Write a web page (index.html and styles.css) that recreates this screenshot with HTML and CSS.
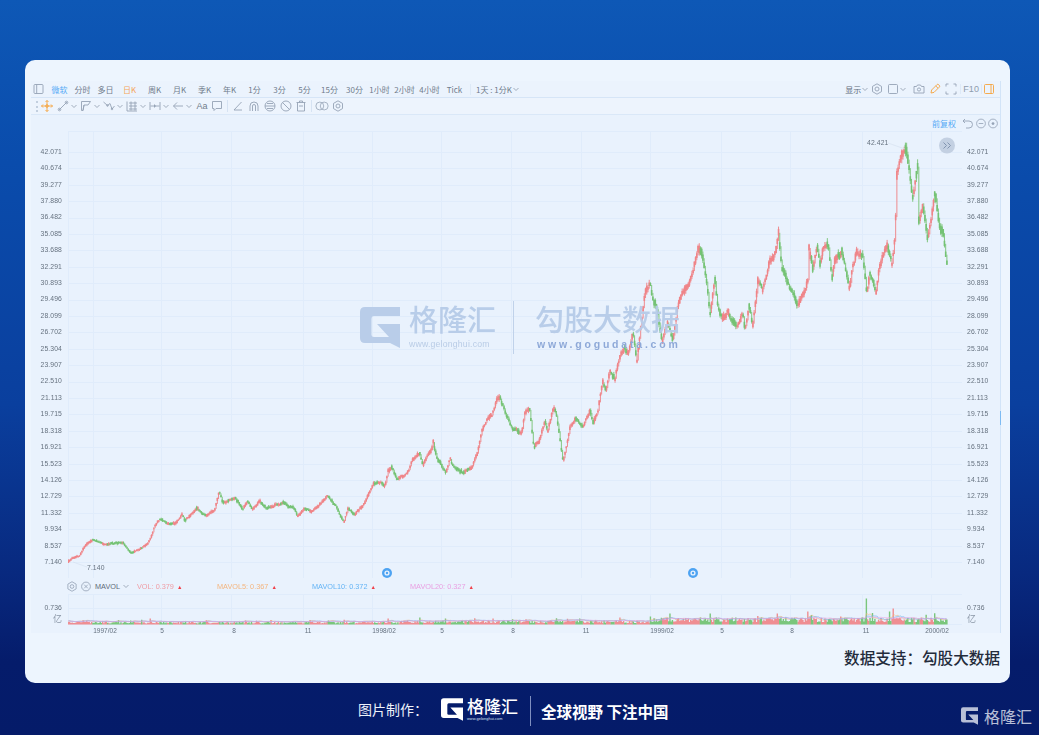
FILE: index.html
```html
<!DOCTYPE html>
<html lang="zh-CN">
<head>
<meta charset="utf-8">
<title>勾股大数据</title>
<link rel="stylesheet" href="styles.css">
</head>
<body>
<svg class="defs" aria-hidden="true">
  <symbol id="i-panel" viewBox="0 0 10 10"><rect x=".5" y=".5" width="9" height="9" rx="1"/><path d="M3.2.5v9"/></symbol>
  <symbol id="i-box" viewBox="0 0 10 10"><rect x=".5" y=".5" width="9" height="9" rx="1"/><path d="M7 .5v9"/></symbol>
  <symbol id="i-chev" viewBox="0 0 8 8"><path d="M1.5 3l2.5 2.5L6.500 3"/></symbol>
  <symbol id="i-gear" viewBox="0 0 12 12"><path d="M6 .8l4.500 2.600v5.200L6 11.200 1.500 8.600V3.400z"/><circle cx="6" cy="6" r="2"/></symbol>
  <symbol id="i-rect" viewBox="0 0 10 10"><rect x=".5" y=".5" width="9" height="9" rx="1"/></symbol>
  <symbol id="i-cam" viewBox="0 0 12 12"><path d="M1 3.500h2.500l1-1.500h3l1 1.500H11v6.500H1z"/><circle cx="6" cy="6.500" r="1.600"/></symbol>
  <symbol id="i-pen" viewBox="0 0 12 12"><path d="M2 10l.6-3L7.800 1.800a1.300 1.300 0 012 0l.4.4a1.300 1.300 0 010 2L5 9.400z"/><path d="M6.800 3l2.200 2.200"/></symbol>
  <symbol id="i-full" viewBox="0 0 12 12"><path d="M1 3.500V1h2.500M8.500 1H11v2.500M11 8.500V11H8.500M3.500 11H1V8.500"/></symbol>
  <symbol id="i-move" viewBox="0 0 12 12"><path d="M6 .5v11M.5 6h11M4.500 2L6 .5 7.500 2M4.500 10L6 11.500 7.500 10M2 4.500L.5 6 2 7.500M10 4.500L11.500 6 10 7.500"/><circle cx="6" cy="6" r="1.300"/></symbol>
  <symbol id="i-line" viewBox="0 0 12 12"><path d="M2 10l8-8"/><circle cx="2.500" cy="9.500" r="1.300"/><circle cx="9.500" cy="2.500" r="1.300"/></symbol>
  <symbol id="i-para" viewBox="0 0 12 12"><path d="M1.500 1.500h9L8 5H4L3 10.500H1.500zM4 5l-1 5.500"/></symbol>
  <symbol id="i-wave" viewBox="0 0 12 12"><path d="M.5 2l4 3.500L7 3.500l2 5.500 2.500-3"/><circle cx="4.500" cy="5.500" r=".8"/><circle cx="9" cy="9" r=".8"/></symbol>
  <symbol id="i-fib" viewBox="0 0 12 12"><path d="M1 1.500v9.500h10M3 3h8M3 6h8M3 9h8M5 1.500v9M9 1.500v9"/></symbol>
  <symbol id="i-range" viewBox="0 0 12 12"><path d="M1 2v8M11 2v8M1.500 6h9"/><path class="solid" d="M5 4l2 2-2 2z"/></symbol>
  <symbol id="i-back" viewBox="0 0 12 12"><path d="M11 6H1.500M5 2.500L1.500 6 5 9.500"/></symbol>
  <symbol id="i-note" viewBox="0 0 12 12"><path d="M1.500 1.500h9v7H5L3 10.500v-2H1.500z"/></symbol>
  <symbol id="i-angle" viewBox="0 0 12 12"><path d="M9.500 2L2 10h8"/></symbol>
  <symbol id="i-mag" viewBox="0 0 12 12"><path d="M2 11V6a4 4 0 018 0v5"/><path d="M4.500 11V6a1.500 1.500 0 013 0v5"/></symbol>
  <symbol id="i-eye" viewBox="0 0 12 12"><circle cx="6" cy="6" r="5"/><path d="M1 6h10M3 3.500h6M3 8.500h6"/></symbol>
  <symbol id="i-ban" viewBox="0 0 12 12"><circle cx="6" cy="6" r="5"/><path d="M2.500 2.500l7 7"/></symbol>
  <symbol id="i-trash" viewBox="0 0 12 12"><path d="M1.500 2.500h9M2.500 2.500v8.500h7V2.500M4.500 2.500V1h3v1.500M4 6h4"/></symbol>
  <symbol id="i-link" viewBox="0 0 16 12"><circle cx="5.500" cy="6" r="4.500"/><circle cx="10.500" cy="6" r="4.500"/></symbol>
  <symbol id="i-undo" viewBox="0 0 12 12"><path d="M3 2L1 4l2 2M1 4h6a3.500 3.500 0 010 7H4"/></symbol>
  <symbol id="i-minus" viewBox="0 0 12 12"><circle cx="6" cy="6" r="4.800"/><path d="M3.500 6h5"/></symbol>
  <symbol id="i-plus" viewBox="0 0 12 12"><circle cx="6" cy="6" r="4.800"/><circle class="solid" cx="6" cy="6" r="1.500"/></symbol>
  <symbol id="i-close" viewBox="0 0 12 12"><circle cx="6" cy="6" r="4.800"/><path d="M4 4l4 4M8 4l-4 4"/></symbol>
  <symbol id="logo-g" viewBox="0 0 40 41"><path class="solid" d="M5 0H40V9H14Q11.500 9 11.500 12V28Q11.500 30 14 30H29L17 17H40V41L30 36H5Q0 36 0 31V5Q0 0 5 0Z"/></symbol>
</svg>

<main class="card">
  <section class="widget">
    <div class="bar bar-top">
      <svg class="ic panel"><use href="#i-panel"/></svg>
      <span class="tab n active-blue">微软</span>
      <span class="tab n">分时</span>
      <span class="tab n">多日</span>
      <span class="tab active-orange">日K</span>
      <span class="tab">周K</span>
      <span class="tab">月K</span>
      <span class="tab">季K</span>
      <span class="tab">年K</span>
      <span class="tab">1分</span>
      <span class="tab">3分</span>
      <span class="tab">5分</span>
      <span class="tab">15分</span>
      <span class="tab">30分</span>
      <span class="tab">1小时</span>
      <span class="tab">2小时</span>
      <span class="tab">4小时</span>
      <span class="tab">Tick</span>
      <span class="period">1天 : 1分K</span>
      <svg class="chev"><use href="#i-chev"/></svg>
      <div class="bar-right">
        <span class="show">显示</span>
        <svg class="chev"><use href="#i-chev"/></svg>
        <svg class="ic ml1"><use href="#i-gear"/></svg>
        <svg class="ic small ml3"><use href="#i-rect"/></svg>
        <svg class="chev"><use href="#i-chev"/></svg>
        <svg class="ic ml5"><use href="#i-cam"/></svg>
        <svg class="ic orange ml2"><use href="#i-pen"/></svg>
        <svg class="ic ml2"><use href="#i-full"/></svg>
        <span class="f10">F10</span>
        <svg class="ic small orange box"><use href="#i-box"/></svg>
      </div>
    </div>

    <div class="bar bar-tools">
      <span class="grip"></span>
      <svg class="ic orange"><use href="#i-move"/></svg>
      <svg class="ic ml2"><use href="#i-line"/></svg><svg class="chev"><use href="#i-chev"/></svg>
      <svg class="ic ml1"><use href="#i-para"/></svg><svg class="chev"><use href="#i-chev"/></svg>
      <svg class="ic ml1"><use href="#i-wave"/></svg><svg class="chev"><use href="#i-chev"/></svg>
      <svg class="ic ml1"><use href="#i-fib"/></svg><svg class="chev"><use href="#i-chev"/></svg>
      <svg class="ic ml1"><use href="#i-range"/></svg><svg class="chev"><use href="#i-chev"/></svg>
      <svg class="ic ml1"><use href="#i-back"/></svg><svg class="chev"><use href="#i-chev"/></svg>
      <span class="aa">Aa</span>
      <svg class="ic ml1"><use href="#i-note"/></svg>
      <span class="sep"></span>
      <svg class="ic"><use href="#i-angle"/></svg>
      <svg class="ic ml2"><use href="#i-mag"/></svg>
      <svg class="ic ml2"><use href="#i-eye"/></svg>
      <svg class="ic ml2"><use href="#i-ban"/></svg>
      <svg class="ic ml1"><use href="#i-trash"/></svg>
      <span class="sep"></span>
      <svg class="ic"><use href="#i-link"/></svg>
      <svg class="ic ml2"><use href="#i-gear"/></svg>
    </div>

    <div class="adjust">
      <span class="adjust-label">前复权</span>
      <svg class="ic ml5"><use href="#i-undo"/></svg>
      <svg class="ic mini"><use href="#i-minus"/></svg>
      <svg class="ic mini"><use href="#i-plus"/></svg>
    </div>

    <div class="pane-price">
      <div class="axis axis-left">
        <span>42.071</span><span>40.674</span><span>39.277</span><span>37.880</span><span>36.482</span><span>35.085</span><span>33.688</span><span>32.291</span><span>30.893</span><span>29.496</span><span>28.099</span><span>26.702</span><span>25.304</span><span>23.907</span><span>22.510</span><span>21.113</span><span>19.715</span><span>18.318</span><span>16.921</span><span>15.523</span><span>14.126</span><span>12.729</span><span>11.332</span><span>9.934</span><span>8.537</span><span>7.140</span>
      </div>
      <svg id="price" class="plot" width="894" height="447" viewBox="68 130 894 447" role="img" aria-label="价格K线图">
        <g id="price-grid" class="grid"></g>
        <g id="candles"></g>
        <path class="leader" d="M888 142L905 148M73 561L87 566"/>
        <text class="val" x="867" y="144">42.421</text>
        <text class="val" x="87" y="569">7.140</text>
        <circle class="more-bg" cx="947" cy="144.500" r="8"/>
        <path class="more" d="M943.500 141.500l3 3-3 3M947.500 141.500l3 3-3 3"/>
        <circle class="mark" cx="387" cy="572" r="5"/><circle class="mark-in" cx="387" cy="572" r="2.600"/><circle class="mark" cx="387" cy="572" r="1.200"/>
        <circle class="mark" cx="693" cy="572" r="5"/><circle class="mark-in" cx="693" cy="572" r="2.600"/><circle class="mark" cx="693" cy="572" r="1.200"/>
      </svg>
      <div class="axis axis-right">
        <span>42.071</span><span>40.674</span><span>39.277</span><span>37.880</span><span>36.482</span><span>35.085</span><span>33.688</span><span>32.291</span><span>30.893</span><span>29.496</span><span>28.099</span><span>26.702</span><span>25.304</span><span>23.907</span><span>22.510</span><span>21.113</span><span>19.715</span><span>18.318</span><span>16.921</span><span>15.523</span><span>14.126</span><span>12.729</span><span>11.332</span><span>9.934</span><span>8.537</span><span>7.140</span>
      </div>
      <div class="watermark">
        <svg class="wm-g"><use href="#logo-g"/></svg>
        <div class="wm-block">
          <span class="wm-cn">格隆汇</span>
          <span class="wm-url">www.gelonghui.com</span>
        </div>
        <span class="wm-div"></span>
        <div class="wm-block">
          <span class="wm-cn">勾股大数据</span>
          <span class="wm-url strong">www.gogudata.com</span>
        </div>
      </div>
    </div>

    <div class="legend">
      <svg class="ic mini"><use href="#i-gear"/></svg>
      <svg class="ic mini"><use href="#i-close"/></svg>
      <span class="lg-name">MAVOL</span>
      <svg class="chev"><use href="#i-chev"/></svg>
      <span class="lg vol">VOL: 0.379 <i>▲</i></span>
      <span class="lg ma5">MAVOL5: 0.367 <i>▲</i></span>
      <span class="lg ma10">MAVOL10: 0.372 <i>▲</i></span>
      <span class="lg ma20">MAVOL20: 0.327 <i>▲</i></span>
    </div>

    <div class="pane-vol">
      <div class="vol-left">
        <span>0.736</span>
        <span class="yi">亿</span>
      </div>
      <svg id="volume" class="plot" width="894" height="40" viewBox="68 593 894 40" role="img" aria-label="成交量图">
        <g id="vol-grid" class="grid"></g>
        <g id="vol-bars"></g>
        <g class="dates">
          <text x="105" y="632">1997/02</text><text x="162" y="632">5</text><text x="234" y="632">8</text><text x="308" y="632">11</text>
          <text x="384" y="632">1998/02</text><text x="442" y="632">5</text><text x="513" y="632">8</text><text x="586" y="632">11</text>
          <text x="662" y="632">1999/02</text><text x="722" y="632">5</text><text x="792" y="632">8</text><text x="866" y="632">11</text>
          <text x="937" y="632">2000/02</text>
        </g>
      </svg>
      <div class="vol-right">
        <span>0.736</span>
        <span class="yi">亿</span>
      </div>
    </div>
    <span class="handle"></span>
  </section>
  <p class="credit">数据支持：勾股大数据</p>
</main>

<footer class="footer">
  <span class="made">图片制作：</span>
  <svg class="ft-g"><use href="#logo-g"/></svg>
  <div class="ft-brand">
    <span class="ft-cn">格隆汇</span>
    <span class="ft-url">www.gelonghui.com</span>
  </div>
  <span class="ft-div"></span>
  <strong class="slogan">全球视野 下注中国</strong>
  <div class="corner">
    <svg class="corner-g"><use href="#logo-g"/></svg>
    <span class="corner-cn">格隆汇</span>
  </div>
</footer>
<script src="script.js"></script>
</body>
</html>
```

FILE: styles.css
```css
* { box-sizing: border-box; }
html, body { margin: 0; height: 735px; overflow: hidden; }
body {
  width: 1039px;
  display: flex;
  flex-direction: column;
  font-family: "Noto Sans CJK SC", "Liberation Sans", sans-serif;
  background: linear-gradient(180deg, #0e58b6 0, #0a4cac 22%, #0a3f9e 55%, #08297f 78%, #051c6b 90%, #051b69 100%);
}
.defs { width: 0; height: 0; position: absolute; }
symbol * { fill: none; stroke: currentColor; stroke-width: .9; }
symbol .solid { fill: currentColor; stroke: none; }

.card {
  width: 985px;
  height: 623px;
  margin: 60px 0 0 25px;
  padding: 21px 9px 0 6px;
  background: #edf5fe;
  border-radius: 10px;
  flex: none;
}
.widget {
  position: relative;
  width: 970px;
  height: 552px;
  background: #e9f2fd;
  color: #707c8c;
  border-right: 1px solid #d2e4f8;
  filter: blur(.5px);
}

.bar { display: flex; align-items: center; font-size: 8px; white-space: nowrap; }
.bar-top { height: 17px; padding-left: 2px; background: #ebf3fd; border-bottom: 1px solid #d6e5f7; }
.bar-tools { height: 17px; padding-left: 5px; border-bottom: 1px solid #dae8f8; background: #edf4fd; }

.ic { width: 14px; height: 12px; color: #95a3b6; flex: none; }
.ic.small { width: 12px; height: 10px; }
.ic.mini { width: 12px; height: 11px; }
.ic.panel { width: 11px; height: 10px; margin-right: 4px; }
.ic.orange { color: #f5a33c; }
.chev { width: 8px; height: 8px; color: #98a5b6; flex: none; }
.ml1 { margin-left: 1px; }
.ml2 { margin-left: 2px; }
.ml3 { margin-left: 3px; }
.ml5 { margin-left: 5px; }

.tab { width: 25px; text-align: center; flex: none; }
.tab.n { width: 23px; }
.active-blue { color: #55a9f6; }
.active-orange { color: #f5a55a; }
.period { margin-left: 3px; border-left: 1px solid #dde9f7; padding-left: 5px; }
.bar-right { margin-left: auto; display: flex; align-items: center; padding-right: 5px; }
.show { color: #5f6b7a; }
.f10 { margin-left: 2px; padding: 0 2px; font: 9px "Liberation Sans", sans-serif; letter-spacing: .1px; color: #8f9cad; border-left: 1px solid #dde9f7; border-right: 1px solid #dde9f7; }
.box { margin-left: 1px; }

.grip { width: 4px; height: 11px; border-left: 2px dotted #c2cfdf; }
.aa { width: 14px; margin-left: 2px; font: 9px "Liberation Sans", sans-serif; text-align: center; }
.sep { width: 1px; height: 12px; margin: 0 3px; background: #d6e3f3; flex: none; }

.adjust { display: flex; align-items: center; justify-content: flex-end; height: 16px; padding-right: 1px; font-size: 8px; }
.adjust-label { color: #55a9f6; }

.pane-price { position: relative; display: flex; height: 447px; }
.axis { display: flex; flex-direction: column; padding-top: 12.800px; font: 6.800px/16.400px "Liberation Sans", sans-serif; color: #65717f; letter-spacing: .1px; flex: none; }
.axis-left { width: 37px; padding-right: 6px; text-align: right; }
.axis-right { width: 38px; padding-left: 5px; }
.plot { display: block; flex: none; }

.grid line { stroke: #e0ecfb; stroke-width: 1; }
.leader { fill: none; stroke: #d3dfee; stroke-width: .6; }
.val { font: 6.800px "Liberation Sans", sans-serif; fill: #65717f; letter-spacing: .1px; }
.more-bg { fill: #c3d0e2; }
.more { fill: none; stroke: #8194b0; stroke-width: 1; }
.mark { fill: #4da3f2; }
.mark-in { fill: #e8f2fd; }

.watermark { position: absolute; left: 329px; top: 170px; display: flex; align-items: flex-start; }
.wm-g { width: 40px; height: 41px; margin: 6px 9px 0 0; color: #b9cde9; }
.wm-block { display: flex; flex-direction: column; }
.wm-cn { font-family: "Liberation Sans", "Noto Sans CJK SC", sans-serif; font-size: 29px; line-height: 34px; margin-top: 3px; font-weight: 500; color: #b6cbe8; opacity: .95; }
.wm-url { font: 8.700px/10px "Liberation Sans", sans-serif; color: #b9cce6; letter-spacing: .2px; margin-top: 1px; }
.wm-url.strong { font-weight: 700; font-size: 10.500px; color: #8ea9d8; letter-spacing: 2.800px; margin-left: 2px; line-height: 10px; }
.wm-div { width: 1px; height: 53px; margin: 0 21px 0 17px; background: #c0d2ea; }

.legend { display: flex; align-items: center; height: 16px; padding-left: 35px; font: 7.300px "Liberation Sans", sans-serif; }
.legend .ic.mini { margin-right: 2px; }
.lg-name { margin-left: 1px; width: 27px; color: #5f6b7a; }
.lg { white-space: nowrap; }
.lg i { font-style: normal; color: #f0404a; font-size: 5.500px; margin-left: 1px; }
.vol { color: #ef9da5; margin-left: 7px; width: 80px; }
.ma5 { color: #f4b57e; width: 95px; }
.ma10 { color: #64b4f5; width: 98px; }
.ma20 { color: #e9a0e2; }

.pane-vol { display: flex; height: 40px; }
.vol-left { width: 37px; padding: 9px 6px 0 0; text-align: right; }
.vol-right { width: 38px; padding: 9px 0 0 5px; }
.vol-left span, .vol-right span { display: block; font: 6.800px/10px "Liberation Sans", sans-serif; color: #65717f; letter-spacing: .1px; }
.vol-left .yi, .vol-right .yi { font: 9px/11px "Noto Sans CJK SC", sans-serif; color: #8a96a6; }
.dates text { font: 6.500px "Liberation Sans", sans-serif; fill: #65717f; text-anchor: middle; }

.handle { position: absolute; right: -1px; top: 330px; width: 1px; height: 14px; background: #7dbbf3; }

.credit { margin: 0; height: 50px; padding: 12px 1px 0 0; text-align: right; font-size: 15.600px; line-height: 24px; font-weight: 500; color: #232b3b; }

.footer { position: relative; flex: 1; display: flex; align-items: center; padding: 4px 0 0 358px; color: #fff; }
.made { width: 83px; margin-bottom: 4px; font-size: 14px; color: #eef2fa; white-space: nowrap; }
.ft-g { width: 22px; height: 23px; margin: 0 4px 4px 0; color: #fff; }
.ft-brand { display: flex; flex-direction: column; width: 63px; margin-bottom: 4px; }
.ft-cn { font-family: "Liberation Sans", "Noto Sans CJK SC", sans-serif; font-size: 17px; line-height: 19px; font-weight: 500; }
.ft-url { font: 3.800px/4px "Liberation Sans", sans-serif; letter-spacing: .1px; color: #dfe6f5; }
.ft-div { width: 1px; height: 30px; background: #7f8fc0; margin-right: 10px; }
.slogan { font-size: 15.500px; font-weight: 700; white-space: nowrap; }
.corner { position: absolute; right: 7px; bottom: 9px; display: flex; align-items: center; gap: 6px; opacity: .8; }
.corner-g { width: 17px; height: 18px; color: #e5e9f3; }
.corner-cn { font-size: 16px; line-height: 20px; color: #e5e9f3; }
```

FILE: script.js
```js
(function () {
  var NS = "http://www.w3.org/2000/svg";
  var X0 = 68, X1 = 962;
  var GRID_X = [68, 93, 161, 231, 303, 372, 441, 511, 581, 650, 721, 790, 862, 931, 962];

  var trace = [[68,560],[73,557],[80,555],[85,545],[93,539],[103,543],[123,542],[132,552],[147,544],[150,538],[155,525],[160,518],[167,523],[175,523],[182,513],[185,520],[197,508],[207,515],[215,508],[219,490],[223,502],[235,497],[243,507],[248,500],[253,508],[260,501],[267,507],[283,502],[293,507],[298,515],[305,507],[312,511],[328,495],[337,507],[344,522],[348,508],[355,514],[365,502],[370,490],[373,483],[380,481],[385,486],[388,470],[392,467],[397,478],[403,475],[409,470],[412,460],[420,453],[423,464],[432,448],[433,440],[437,457],[446,473],[450,458],[453,465],[463,472],[472,467],[477,455],[482,430],[487,419],[492,415],[497,400],[500,397],[505,410],[513,430],[522,430],[525,412],[530,410],[534,447],[540,438],[545,420],[548,430],[553,408],[556,410],[559,430],[563,462],[567,443],[570,427],[575,418],[583,426],[590,410],[593,420],[598,410],[603,380],[606,390],[610,370],[615,377],[620,355],[625,347],[628,355],[633,332],[637,362],[642,317],[645,290],[650,281],[653,300],[657,307],[662,340],[668,323],[673,338],[678,305],[683,293],[688,285],[692,272],[698,249],[702,253],[707,280],[710,312],[715,277],[717,300],[722,317],[728,310],[737,328],[743,313],[745,327],[749,305],[753,325],[758,277],[763,290],[770,260],[777,250],[778,228],[782,267],[787,280],[793,292],[798,305],[805,290],[808,282],[809,247],[813,267],[817,245],[820,262],[823,250],[828,240],[832,275],[835,260],[842,252],[850,290],[852,268],[857,252],[863,255],[867,292],[870,272],[876,293],[878,275],[882,258],[887,243],[892,263],[895,237],[897,170],[902,152],[906,148],[910,173],[913,197],[918,165],[917.500,223],[923,207],[928,240],[935,190],[939,223],[943,230],[947,262]];

  var seed = 20000;
  function rnd() { seed = (seed * 1664525 + 1013904223) % 4294967296; return seed / 4294967296; }

  function yAt(x) {
    for (var i = 1; i < trace.length; i++) {
      if (x <= trace[i][0]) {
        var a = trace[i - 1], b = trace[i];
        var t = (x - a[0]) / Math.max(b[0] - a[0], .01);
        return a[1] + (b[1] - a[1]) * t;
      }
    }
    return trace[trace.length - 1][1];
  }

  function el(name, attrs, parent) {
    var n = document.createElementNS(NS, name);
    for (var k in attrs) n.setAttribute(k, attrs[k]);
    parent.appendChild(n);
    return n;
  }

  // grids
  var pg = document.getElementById("price-grid");
  GRID_X.forEach(function (x) { el("line", { x1: x + .5, x2: x + .5, y1: 130, y2: 577 }, pg); });
  el("line", { x1: X0, x2: X1, y1: 130.5, y2: 130.5 }, pg);
  for (var r = 0; r < 26; r++) {
    var gy = Math.round(151 + r * 16.4) + .5;
    el("line", { x1: X0, x2: X1, y1: gy, y2: gy }, pg);
  }
  var vg = document.getElementById("vol-grid");
  GRID_X.forEach(function (x) { el("line", { x1: x + .5, x2: x + .5, y1: 593, y2: 624 }, vg); });
  [593.5, 607.5, 623.5].forEach(function (y) { el("line", { x1: X0, x2: X1, y1: y, y2: y }, vg); });

  // candles
  var step = 1.22, red = "", green = "", redB = "", greenB = "", vols = [];
  var vr = "", vg2 = "", wob = 0, prevY = null;
  var spikes = { 866: 26, 893: 16, 890: 13, 777: 11, 808: 13, 710: 11, 150: 6, 131: 4, 388: 6, 420: 7, 445: 6, 580: 6, 620: 7, 650: 8 };
  for (var x = X0 + .5; x <= 947; x += step) {
    var y0 = yAt(x), prev = yAt(x - 1.6), next = yAt(x + 1.6);
    var lvl = (560 - y0) / 400;
    var amp = 1.3 + lvl * 4.5;
    wob = .55 * wob + (rnd() - .5) * amp * .9;
    var y = y0 + wob;
    var up = (next - prev) + (rnd() - .5) * (4 + lvl * 9) < 0;
    var body = amp * (.6 + rnd());
    var top = y - body / 2, bot = y + body / 2;
    var hi = top - rnd() * amp * .7, lo = bot + rnd() * amp * .7;
    if (prevY !== null) { hi = Math.min(hi, prevY + .5); lo = Math.max(lo, prevY - .5); }
    hi = Math.min(hi, y0); lo = Math.max(lo, y0);
    prevY = y;
    var seg = "M" + x.toFixed(2) + " " + hi.toFixed(1) + "V" + lo.toFixed(1);
    var rect = "M" + (x - .8).toFixed(2) + " " + top.toFixed(1) + "h1.600V" + bot.toFixed(1) + "h-1.600z";
    if (up) { red += seg; redB += rect; } else { green += seg; greenB += rect; }

    // volume
    var base = x < 400 ? 2.2 : x < 650 ? 3 : 5.2;
    var v = base * (.45 + rnd() * .9);
    if (rnd() < .035) v += base * 1.1;
    var kx = Math.round(x);
    if (spikes[kx]) v = spikes[kx];
    vols.push([x, v]);
    var vrect = "M" + (x - .7).toFixed(2) + " " + (623.5 - v).toFixed(1) + "h1.400V623.500h-1.400z";
    if (up) vr += vrect; else vg2 += vrect;
  }
  var cg = document.getElementById("candles");
  el("path", { d: red, stroke: "#ee8a8e", "stroke-width": 1, fill: "none" }, cg);
  el("path", { d: green, stroke: "#80c77f", "stroke-width": 1, fill: "none" }, cg);
  el("path", { d: redB, fill: "#ef8488" }, cg);
  el("path", { d: greenB, fill: "#74c274" }, cg);

  var vb = document.getElementById("vol-bars");
  el("path", { d: vr, fill: "#ef8e92" }, vb);
  el("path", { d: vg2, fill: "#7ac67c" }, vb);

  function ma(n, color) {
    var d = "", sum = 0;
    for (var i = 0; i < vols.length; i++) {
      sum += vols[i][1];
      if (i >= n) sum -= vols[i - n][1];
      var m = sum / Math.min(i + 1, n);
      d += (i ? "L" : "M") + vols[i][0].toFixed(1) + " " + (623.5 - m - 1).toFixed(1);
    }
    el("path", { d: d, fill: "none", stroke: color, "stroke-width": .6 }, vb);
  }
  ma(5, "#f4b57e");
  ma(10, "#64b4f5");
  ma(20, "#e9a0e2");
})();
```
